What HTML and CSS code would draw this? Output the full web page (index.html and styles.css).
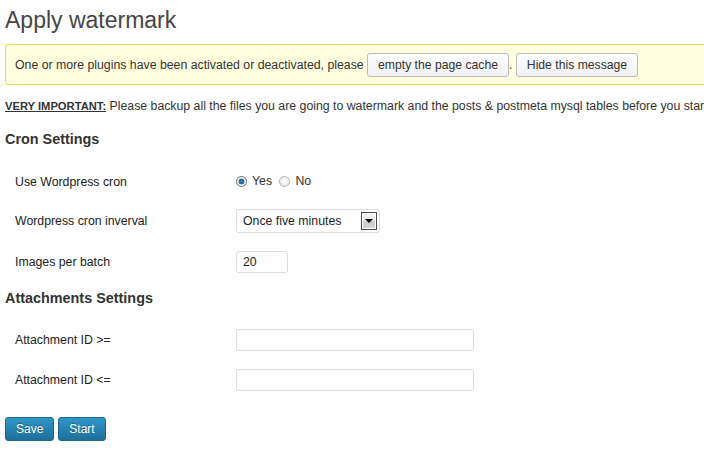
FILE: index.html
```html
<!DOCTYPE html>
<html lang="en">
	<head>
		<meta charset="UTF-8" />
		<title>Apply watermark</title>
		<link rel="stylesheet" href="styles.css">
	</head>
	<body>
		<div class="wrap">
			<h2>Apply watermark</h2>
			<div class="notice">
				One or more plugins have been activated or deactivated, please
				<button class="button">empty the page cache</button>.
				<button class="button">Hide this message</button>
			</div>

			<p class="important"><u><b>VERY IMPORTANT:</b></u> Please backup all the files you are going to watermark and the posts &amp; postmeta mysql tables before you start the process.</p>

			<h3 class="first">Cron Settings</h3>
			<table class="form-table cron">
				<tr>
					<th>Use Wordpress cron</th>
					<td>
						<label class="radio"><span class="radio-dot checked"></span>Yes</label>
						<label class="radio"><span class="radio-dot"></span>No</label>
					</td>
				</tr>
				<tr>
					<th>Wordpress cron inverval</th>
					<td>
						<div class="select">
							<span>Once five minutes</span>
							<span class="select-arrow"></span>
						</div>
					</td>
				</tr>
				<tr>
					<th>Images per batch</th>
					<td><input type="text" class="small-text" value="20"></td>
				</tr>
			</table>

			<h3>Attachments Settings</h3>
			<table class="form-table">
				<tr>
					<th>Attachment ID &gt;=</th>
					<td><input type="text" class="regular-text"></td>
				</tr>
				<tr>
					<th>Attachment ID &lt;=</th>
					<td><input type="text" class="regular-text"></td>
				</tr>
			</table>

			<div class="actions">
				<button class="button-primary">Save</button>
				<button class="button-primary">Start</button>
			</div>
		</div>
	</body>
</html>
```

FILE: styles.css
```css
body {
	margin: 0;
	font-family: "Liberation Sans", Arial, sans-serif;
	font-size: 12.3px;
	line-height: 16px;
	color: #333;
	background-color: #fff;
	overflow: hidden;
}
.wrap {
	padding-left: 5px;
	width: 1000px;
}
h2 {
	margin: 0;
	padding-top: 6px;
	font-size: 23px;
	line-height: 29px;
	font-weight: normal;
	color: #464646;
}
.notice {
	margin-top: 9px;
	padding: 8px 9px 7px;
	background-color: #ffffe0;
	border: 1px solid #e6db55;
	border-radius: 3px;
	line-height: 24px;
	white-space: nowrap;
}
.button {
	height: 24px;
	padding: 0 10px;
	font-family: inherit;
	font-size: 12.2px;
	color: #333;
	background: linear-gradient(#fefefe, #f1f1f1);
	border: 1px solid #bbb;
	border-radius: 3px;
	vertical-align: top;
}
.important {
	margin: 13px 0 0;
	white-space: nowrap;
}
.important b {
	font-size: 11.2px;
}
h3 {
	margin: 7px 0 0;
	font-size: 14.4px;
	line-height: 18px;
	font-weight: bold;
	color: #333;
}
h3.first {
	margin-top: 16px;
}
.form-table {
	border-collapse: collapse;
	margin-top: 13px;
}
.form-table.cron {
	margin-top: 16px;
}
.form-table th {
	width: 221px;
	padding: 9px 0 9px 10px;
	text-align: left;
	font-weight: normal;
	vertical-align: middle;
	color: #222;
}
.form-table td {
	padding: 9px 0;
	vertical-align: top;
}
.radio {
	display: inline-flex;
	align-items: center;
	margin-right: 4px;
}
.radio-dot {
	width: 9px;
	height: 9px;
	margin-right: 5px;
	border: 1px solid #b4b4b4;
	border-radius: 50%;
	background: radial-gradient(circle at 50% 40%, #fff, #e2e2e2);
}
.radio-dot.checked {
	background: radial-gradient(circle, #2d8ad0 0, #1c5f9a 2.6px, #fff 3.3px, #e8e8e8 5px);
	border-color: #6b6b6b;
}
.select {
	display: flex;
	align-items: center;
	justify-content: space-between;
	width: 144px;
	height: 24px;
	padding: 0 2px 0 6px;
	border: 1px solid #dcdcdc;
	border-radius: 3px;
	box-sizing: border-box;
	color: #222;
}
.select-arrow {
	position: relative;
	width: 14px;
	height: 16px;
	border: 1px solid #4a4a4a;
	background: linear-gradient(#f4f4f4 0, #e6e6e6 45%, #cdcdcd 55%, #d6d6d6 100%);
	box-shadow: inset 0 0 0 1px #fff;
}
.select-arrow::after {
	content: "";
	position: absolute;
	left: 3px;
	top: 6px;
	border-left: 4px solid transparent;
	border-right: 4px solid transparent;
	border-top: 4px solid #000;
}
input {
	height: 22px;
	padding: 0 6px;
	font-family: inherit;
	font-size: 12.3px;
	color: #222;
	border: 1px solid #dcdcdc;
	border-radius: 3px;
	box-sizing: border-box;
	vertical-align: top;
}
.small-text {
	width: 52px;
}
.regular-text {
	width: 238px;
}
.actions {
	margin-top: 17px;
	display: flex;
	gap: 4px;
}
.button-primary {
	height: 24px;
	padding: 0 10px;
	font-family: inherit;
	font-size: 12px;
	color: #fff;
	background: linear-gradient(#2e96c8, #1f6f99);
	border: 1px solid #1c6790;
	border-radius: 3px;
	text-shadow: 0 -1px 0 rgba(0, 0, 0, 0.3);
}
```
